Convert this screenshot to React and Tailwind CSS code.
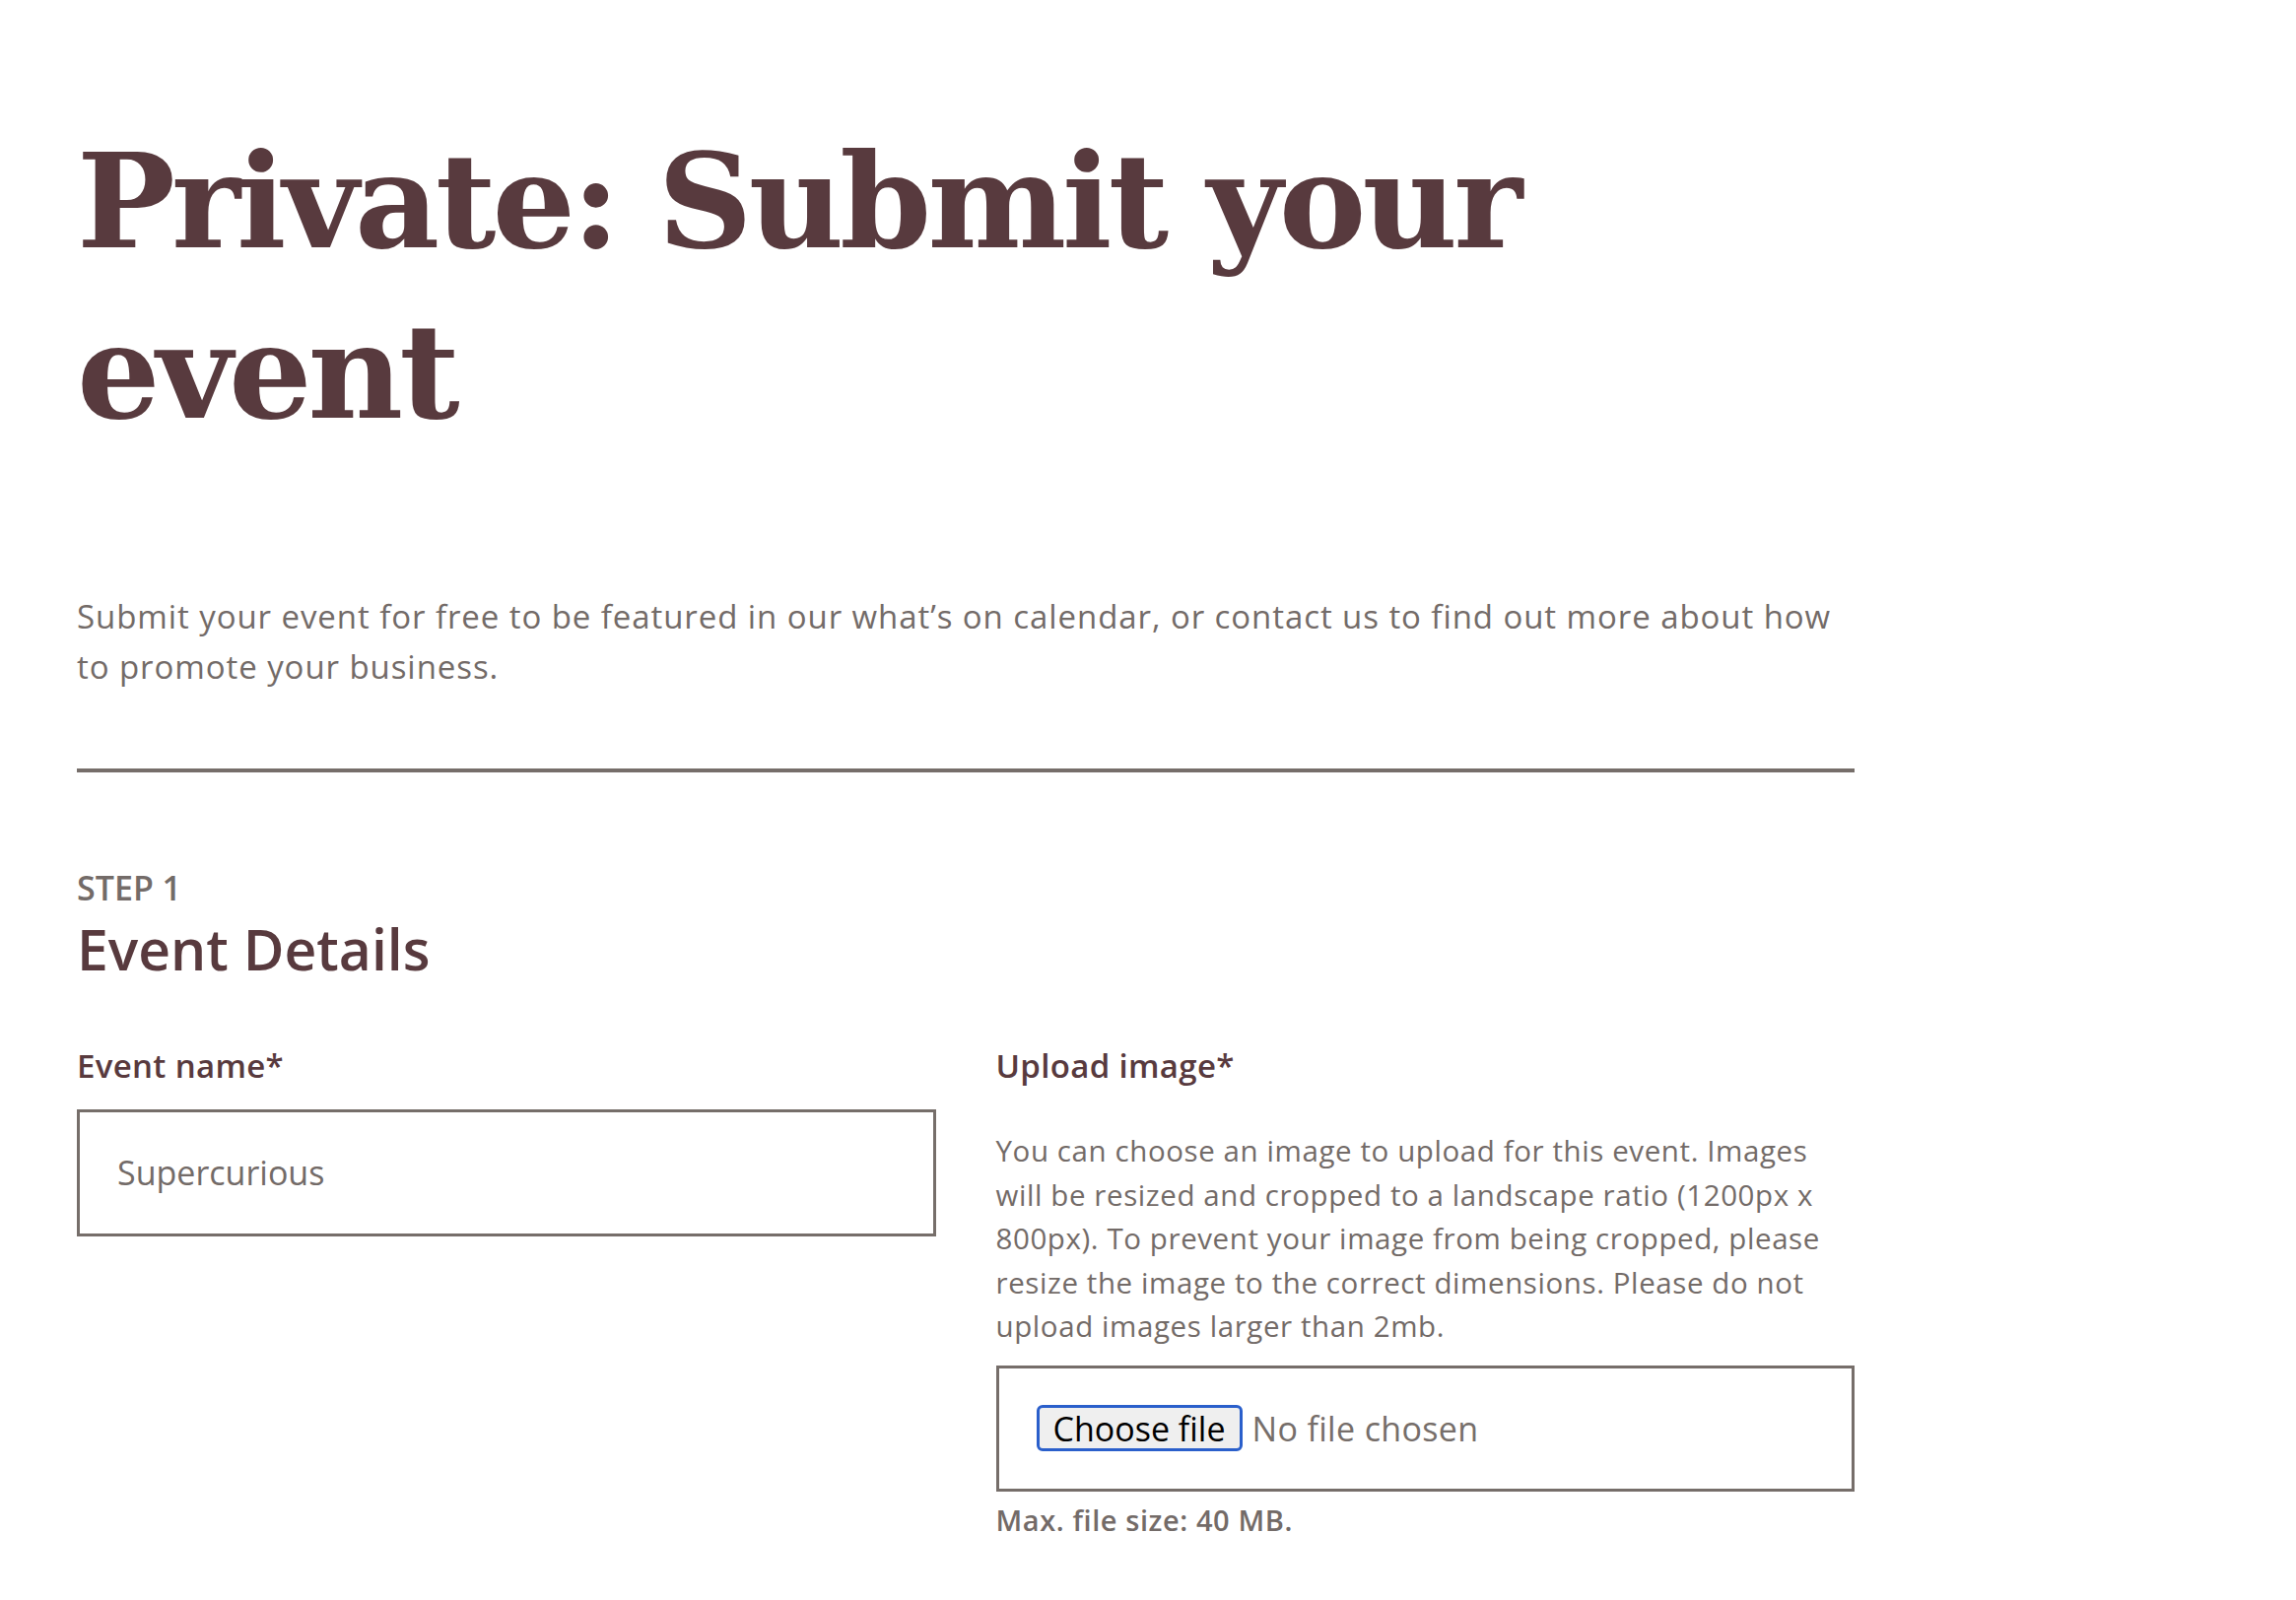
import React from 'react';

const SANS = "font-['Open_Sans',sans-serif]";

const FileField = () => (
  <div className="flex h-[128px] items-center border-[3px] border-[#766e6a] pl-[38px]">
    <span className="flex h-[47px] items-center rounded-[6px] border-[3px] border-[#2a5fcb] bg-[#efefef] px-[14px] text-[34px] leading-none text-black">
      Choose file
    </span>
    <span className="ml-[10px] text-[34px] leading-none tracking-[0.01em] text-[#766e6a]">No file chosen</span>
  </div>
);

export default function App() {
  return (
    <div className={`min-h-screen bg-white ${SANS}`}>
      <div className="ml-[78px] w-[1804px] pt-[118px] pb-[60px]">
        {/* Page title */}
        <h1 className="font-['DejaVu_Serif',serif] text-[133px] font-bold leading-[173px] tracking-[-0.03em] text-[#583a3e]">
          Private: Submit your event
        </h1>

        <p className="mt-[136px] text-[33px] leading-[51px] tracking-[0.028em] text-[#736b68]">
          Submit your event for free to be featured in our what’s on calendar, or contact us to find out more about how to promote your business.
        </p>

        <hr className="mt-[78px] border-t-4 border-[#766e6a]" />

        {/* Step 1 */}
        <div className="mt-[97px] text-[34px] font-semibold leading-[40px] text-[#736b68]">STEP 1</div>
        <h2 className="mt-[6px] text-[57px] font-semibold leading-[72px] text-[#583a3e]">Event Details</h2>

        <div className="mt-[63px] grid grid-cols-2 items-start gap-x-[61px]">
          <div>
            <label className="block text-[33px] font-semibold leading-[40px] tracking-[0.01em] text-[#583a3e]">Event name*</label>
            <div className="mt-[24px] flex h-[129px] items-center border-[3px] border-[#766e6a] pl-[38px] text-[34px] text-[#736b68]">
              Supercurious
            </div>
          </div>

          <div>
            <label className="block text-[33px] font-semibold leading-[40px] tracking-[0.01em] text-[#583a3e]">Upload image*</label>
            <p className="mt-[44px] text-[29.5px] leading-[44.5px] tracking-[0.02em] text-[#736b68]">
              You can choose an image to upload for this event. Images will be resized and cropped to a landscape ratio (1200px x 800px). To prevent your image from being cropped, please resize the image to the correct dimensions. Please do not upload images larger than 2mb.
            </p>
            <div className="mt-[17px]">
              <FileField />
            </div>
            <div className="mt-[11px] text-[29px] font-semibold leading-[36px] tracking-[0.02em] text-[#736b68]">Max. file size: 40 MB.</div>
          </div>
        </div>
      </div>
    </div>
  );
}
